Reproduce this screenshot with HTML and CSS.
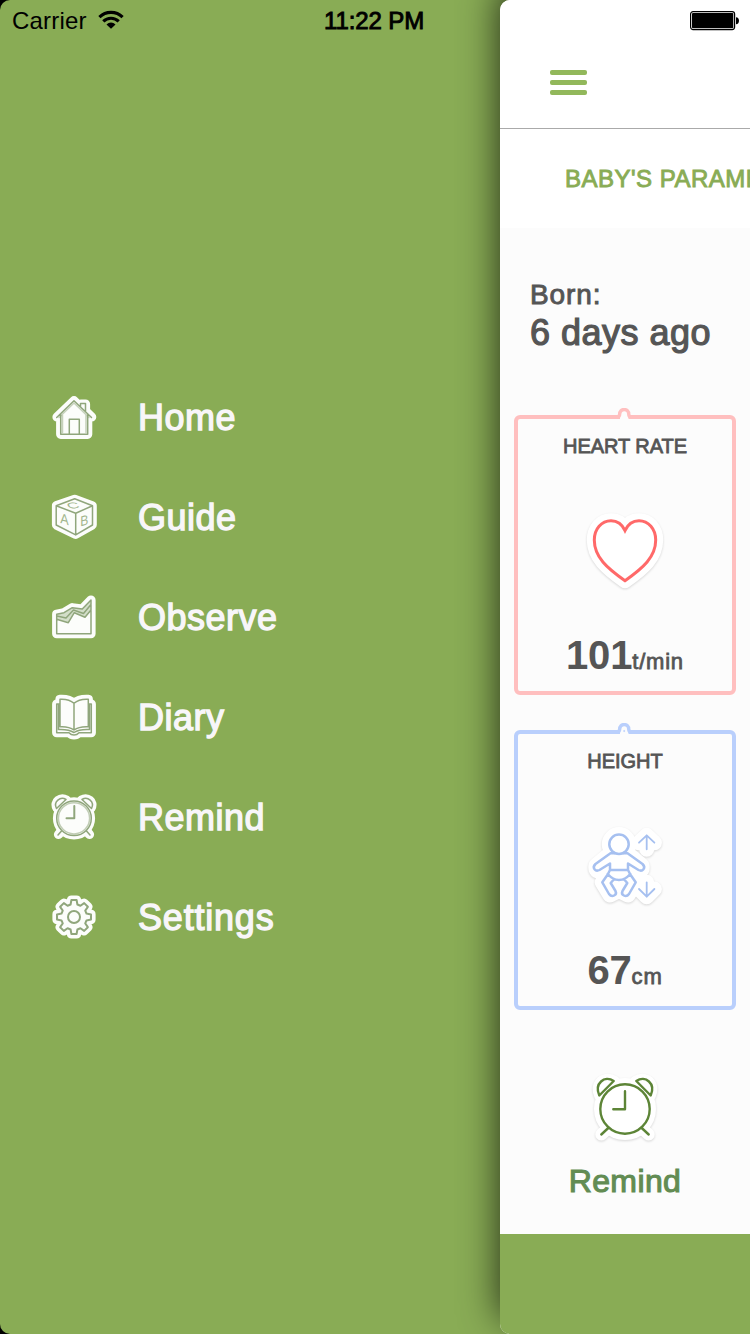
FILE: index.html
```html
<!DOCTYPE html>
<html lang="en">
<head>
<meta charset="utf-8">
<title>Baby</title>
<link rel="stylesheet" href="styles.css">
</head>
<body>
<div class="screen">
  <header class="status">
    <span class="carrier">Carrier</span>
    <svg class="wifi" width="26" height="20" viewBox="0 0 26 20"><g fill="none" stroke="#000" stroke-width="3.1"><path d="M1.4 7.2a16.4 16.4 0 0 1 23.2 0"/><path d="M5.3 11.4a10.9 10.9 0 0 1 15.4 0"/></g><path d="M13 18.8L8.5 14.4a6.4 6.4 0 0 1 9 0Z"/></svg>
    <span class="time">11:22 PM</span>
    <svg class="battery" width="50" height="20" viewBox="0 0 50 20"><rect x=".6" y=".6" width="44" height="18" rx="2.5" fill="#fff" stroke="#000" stroke-width="1.2"/><rect x="2" y="2" width="41.3" height="15.2" rx="1"/><path d="M46 6.2c4 0 4 7 0 7Z"/></svg>
  </header>

  <nav class="menu">
    <a class="item"><svg class="icon" viewBox="0 0 48 48">
      <path class="halo" d="M24 7.7L7 24h3.7v17.3h27V24h4L35.5 18v-7h-4.5v3.5Z"/>
      <g class="line"><path d="M6.7 24.5L24 7.7l17.5 16.8M10.7 21.5v19.8h27V21.5M19.3 41.3v-15h10v15M30.5 13.5v-3h5v7.5"/><path d="M9 24.5L24 10l15 14.5M12.500 22v17.500M36 22v17.500" opacity=".5"/></g></svg><span>Home</span></a>
    <a class="item"><svg class="icon" viewBox="0 0 48 48">
      <path class="halo" d="M24.7 6.3L42.2 12.7V32l-16.500 9.300L6.500 32V12.7Z"/>
      <path class="line" d="M24.7 5.8L42.5 12.7V32l-16.800 9.800L6.200 32V12.7ZM6.200 12.7l19.500 7.6 16.800-7.6M25.700 20.300V42"/>
      <g class="letters"><text transform="matrix(1.150 .3 0 1.300 10.300 30)">A</text><text transform="matrix(1.100 -.3 0 1.300 30.300 33.500)">B</text><text transform="matrix(1.500 -.1 .4 .75 18.500 15.800)">C</text></g></svg><span>Guide</span></a>
    <a class="item"><svg class="icon" viewBox="0 0 48 48">
      <path class="halo" d="M6.700 21.300l7.300-1.600 8.300-5 10 1.300L41 7v33.700H6.700Z"/>
      <path class="band" d="M6.700 21.300l7.300-1.600 8.300-5 10 1.300L41 7v10l-6 7.300-10.700-4.600-6 10-11.600-3.400Z"/>
      <path class="line" d="M6.700 21.300l7.300-1.600 8.300-5 10 1.300L41 7v33.700H6.700ZM6.700 26.300l11.600 3.400 6-10L35 24.300l6-7.300M7 23l9 2 7.500-8 10 3.500L41 11.500"/></svg><span>Observe</span></a>
    <a class="item"><svg class="icon" viewBox="0 0 48 48">
      <path class="halo" d="M6.700 11H10V6.300q9-.5 14 4 5-4.500 14.300-4V11h3v28.700H29q-2.500 2.300-5 2.300t-5-2.300H6.700Z"/>
      <path class="line" d="M24 10.300q-5-4.500-14-4v27.400q9-.5 14 3.300 5-3.800 14.300-3.300V6.300q-9.300-.5-14.300 4V37M9 11H6.700v28.700H19q2 2.300 5 2.300t5-2.300h12.300V11H39M8.500 12v24.500q10-.5 15.500 3 5-3.500 15.500-3V12"/></svg><span>Diary</span></a>
    <a class="item"><svg class="icon" viewBox="0 0 48 48">
      <g class="halo"><circle cx="24" cy="25.300" r="16.500"/><path d="M7 15C3.500 8.500 10.500 3.800 16.500 7ZM41 15C44.500 8.500 37.500 3.800 31.500 7ZM11.500 38L8.500 41.500M36.500 38l3 3.500"/></g>
      <g class="line"><circle cx="24" cy="25.300" r="17.300"/><circle cx="24" cy="25.300" r="15.600" opacity=".55"/><path d="M6.500 15.500C3 8.500 10.500 3 16 6.500ZM41.500 15.500C45 8.500 37.500 3 32 6.500ZM11.500 38L8 42M36.500 38l3.500 4"/><path stroke-width="2" d="M24.300 13v12.300h-7.800"/></g></svg><span>Remind</span></a>
    <a class="item"><svg class="icon" viewBox="-24 -24 48 48">
      <path class="halo" d="M-3.400-12.500L-2.600-17H2.600L3.400-12.500 6.430-11.240 10.180-13.860 13.860-10.180 11.240-6.430 12.500-3.400 17-2.600V2.600L12.500 3.400 11.240 6.430 13.860 10.180 10.180 13.860 6.430 11.240 3.400 12.500 2.600 17H-2.600L-3.400 12.500-6.430 11.240-10.180 13.860-13.860 10.180-11.240 6.430-12.500 3.400-17 2.600V-2.600L-12.500-3.400-11.240-6.430-13.860-10.180-10.180-13.860-6.430-11.240Z"/>
      <g class="line heavy"><path d="M-3.400-12.500L-2.600-17H2.600L3.400-12.500 6.430-11.240 10.180-13.860 13.860-10.180 11.240-6.430 12.500-3.400 17-2.600V2.600L12.500 3.400 11.240 6.430 13.860 10.180 10.180 13.860 6.430 11.240 3.400 12.500 2.600 17H-2.600L-3.400 12.500-6.430 11.240-10.180 13.860-13.860 10.180-11.240 6.430-12.500 3.400-17 2.600V-2.600L-12.500-3.400-11.240-6.430-13.860-10.180-10.180-13.860-6.430-11.240Z"/><circle r="6"/></g></svg><span class="wide">Settings</span></a>
  </nav>

  <main class="panel">
    <div class="navbar"><div class="burger"><i></i><i></i><i></i></div></div>
    <h1 class="title">BABY'S PARAMETERS</h1>
    <section class="born"><span class="born-label">Born:</span><span class="born-age">6 days ago</span></section>
    <section class="card heart">
      <svg class="notch" width="20" height="14" viewBox="0 0 20 14"><path class="gap" d="M6 5h8.500v6H6Z"/><path d="M2 9.300Q5.700 9.300 5.700 6a4.500 4.500 0 0 1 9 0Q14.700 9.300 18 9.300"/></svg>
      <h2>HEART RATE</h2>
      <svg class="pic" viewBox="0 0 90 90"><path class="sticker" d="M45 25C42 19 37 15.700 31 15.700 21.500 15.700 14.300 24 14.300 35 14.300 52 27 63 45 75.700 63 63 75.700 52 75.700 35 75.700 24 68.500 15.700 59 15.700 53 15.700 48 19 45 25Z"/><path class="stroke" d="M45 25.500C42 19 37 15.700 31 15.700 21.500 15.700 14.300 24 14.300 35 14.300 52 27 63 45 75.700 63 63 75.700 52 75.700 35 75.700 24 68.500 15.700 59 15.700 53 15.700 48 19 45 25.500Z"/></svg>
      <p class="value"><b>101</b><span>t/min</span></p>
    </section>
    <section class="card height">
      <svg class="notch" width="20" height="14" viewBox="0 0 20 14"><path class="gap" d="M6 5h8.500v6H6Z"/><path d="M2 9.300Q5.700 9.300 5.700 6a4.500 4.500 0 0 1 9 0Q14.700 9.300 18 9.300"/><circle cx="10.200" cy="8" r=".6" stroke-width="1"/></svg>
      <h2>HEIGHT</h2>
      <svg class="pic" viewBox="0 0 90 90">
        <g class="sticker"><circle cx="39" cy="24.300" r="9.700"/><path d="M31 33L16 45.500Q15 51 19 51L30 44 28 54 22.300 62.300 30 75 36 72 39 62 42 72 48 75 55.700 62.300 50 54 48 44 59 51Q63 51 62 45.500L47 33ZM66.700 29.300v-14M59 22.700l7.700-7.400 7.700 7.400M66.700 62.300v14.400M59 69l7.700 7.700L74.400 69"/></g>
        <g class="stroke"><circle cx="39" cy="24.300" r="9.700"/><path d="M34.500 33.300h-4L15.500 44c-4 4 0 8 4 6L30 43.500V50h18v-6.500L58.500 50c4 2 8-2 4-6L47.500 33.300h-4M30 50l-2.300 4.500L22.300 62.300 29 74c3 4 8.500 1 6.500-3L30.700 63l3.500-4M48 50l2.300 4.500 5.400 7.800L49 74c-3 4-8.500 1-6.500-3L47.300 63l-3.500-4M27.700 54Q33 60 39 60T50.300 54"/><path class="thin" d="M66.700 29.300v-14M59 22.700l7.700-7.400 7.700 7.400M66.700 62.300v14.400M59 69l7.700 7.700L74.400 69"/></g></svg>
      <p class="value"><b>67</b><span>cm</span></p>
    </section>
    <section class="remind">
      <svg width="80" height="80" viewBox="0 0 80 80">
        <g class="sticker"><circle cx="40" cy="40" r="25"/><path d="M15 26C10 15 20 7 29 12.500ZM65 26C70 15 60 7 51 12.500ZM23.300 59L16.300 65.500M56.700 59l7 6.500"/></g>
        <g class="stroke"><circle cx="40" cy="40" r="24.700"/><path d="M14.300 26.500C9 14.500 19.500 6 28.700 12ZM65.700 26.500C71 14.500 60.500 6 51.300 12ZM23.300 59L16.300 65.500M56.700 59l7 6.500M40 22.300V40.300H28.300"/></g></svg>
      <span>Remind</span>
    </section>
    <footer class="footer"></footer>
  </main>
</div>
</body>
</html>
```
FILE: styles.css
```css
* { box-sizing: border-box; margin: 0; padding: 0; }
body { width: 750px; height: 1334px; background: #000; overflow: hidden; font-family: "Liberation Sans", Arial, sans-serif; }
svg { display: block; flex: none; }
.screen { position: relative; display: flex; width: 750px; height: 1334px; background: #89ac55; border-radius: 10px 0 0 10px; overflow: hidden; }

/* status bar floats over both the menu and the panel */
.status { position: absolute; z-index: 2; top: 0; left: 0; width: 750px; height: 40px; display: grid; grid-template-columns: 88px 236px 366px 60px; font-size: 24px; line-height: 42px; color: #000; }
.carrier { padding-left: 12px; letter-spacing: .2px; white-space: nowrap; }
.wifi { margin: 10px 0 0 10px; }
.time { white-space: nowrap; -webkit-text-stroke: .9px #000; letter-spacing: -.1px; }
.battery { margin-top: 11px; }

.menu { flex: none; width: 500px; padding: 367px 0 0 50px; }
.item { display: flex; align-items: center; gap: 40px; height: 100px; font-size: 36px; color: #f8f6f9; -webkit-text-stroke: 1.3px #f8f6f9; letter-spacing: .5px; }
.item span { padding-top: 2px; }
.item .wide { letter-spacing: .8px; }
.icon { width: 48px; height: 48px; }
.halo { fill: #fcfdfb; stroke: #fcfdfb; stroke-width: 9.200; stroke-linejoin: round; stroke-linecap: round; }
.line { fill: none; stroke: #90a67c; stroke-width: 1.500; stroke-linejoin: round; stroke-linecap: round; }
.heavy { stroke-width: 2; }
.band { fill: #d3dec9; }
.letters { fill: #a1b58d; font-size: 11px; -webkit-text-stroke: .2px #a1b58d; letter-spacing: 0; }

.panel { flex: none; width: 250px; height: 1334px; display: flex; flex-direction: column; background: #fcfcfc; border-radius: 10px 0 0 10px; box-shadow: 0 -14px 38px rgba(0, 0, 0, .76); overflow: hidden; color: #555; }
.navbar { flex: none; height: 129px; padding: 70px 0 0 50px; background: #fff; border-bottom: 1px solid #aaa; }
.burger { display: flex; flex-direction: column; gap: 5px; width: 37px; }
.burger i { height: 5px; border-radius: 2px; background: #92b85b; }
.title { flex: none; height: 99px; padding-left: 65px; background: #fff; font-size: 24px; font-weight: 400; line-height: 100px; white-space: nowrap; letter-spacing: .5px; color: #89ac55; -webkit-text-stroke: .9px #89ac55; }
.born { flex: none; height: 187px; padding: 49px 0 0 30px; display: flex; flex-direction: column; -webkit-text-stroke: .9px #555; }
.born-label { font-size: 28px; line-height: 36px; letter-spacing: .9px; }
.born-age { font-size: 36px; line-height: 40px; letter-spacing: .5px; -webkit-text-stroke-width: 1.2px; white-space: nowrap; }

.card { position: relative; flex: none; width: 222px; height: 280px; margin: 0 14px 35px; border: 4px solid; border-radius: 6px; display: flex; flex-direction: column; align-items: center; }
.heart { border-color: #ffbfbf; --ink: #ff6969; --edge: #ffbfbf; }
.height { border-color: #b9cffc; --ink: #a6c0f0; --edge: #b9cffc; }
.notch { position: absolute; top: -11px; left: 96px; fill: none; stroke: var(--edge); stroke-width: 3.400; }
.notch .gap { fill: #fcfcfc; stroke: none; }
.card h2 { height: 71px; padding-top: 14px; font-size: 20px; line-height: 26px; font-weight: 400; color: #555; -webkit-text-stroke: .8px #555; letter-spacing: -.05px; }
.pic { width: 90px; height: 90px; margin-top: 15px; }
.sticker { fill: #fff; stroke: #fff; stroke-width: 15; stroke-linejoin: round; stroke-linecap: round; filter: drop-shadow(0 1px 1px rgba(0, 0, 0, .15)); }
.stroke { fill: none; stroke: var(--ink); stroke-width: 2.800; stroke-linejoin: round; stroke-linecap: round; }
.heart .stroke { stroke-linejoin: miter; stroke-width: 3; }
.height .stroke { stroke-width: 2.500; }
.height .thin { stroke-width: 1.800; }
.value { display: flex; align-items: baseline; margin-top: 37px; line-height: 46px; }
.value b { font-size: 40px; font-weight: 700; letter-spacing: -.2px; }
.value span { font-size: 22px; letter-spacing: .8px; -webkit-text-stroke: .8px #555; }

.remind { flex: none; --ink: #5d8537; height: 189px; padding-top: 24px; display: flex; flex-direction: column; align-items: center; font-size: 32px; color: #628c53; -webkit-text-stroke: 1.1px #628c53; letter-spacing: .4px; line-height: 40px; }
.remind span { margin-top: 12px; }
.remind .sticker { stroke-width: 12; }
.remind .stroke { stroke-width: 2.400; }
.footer { flex: 1; background: #89ac55; }
```
